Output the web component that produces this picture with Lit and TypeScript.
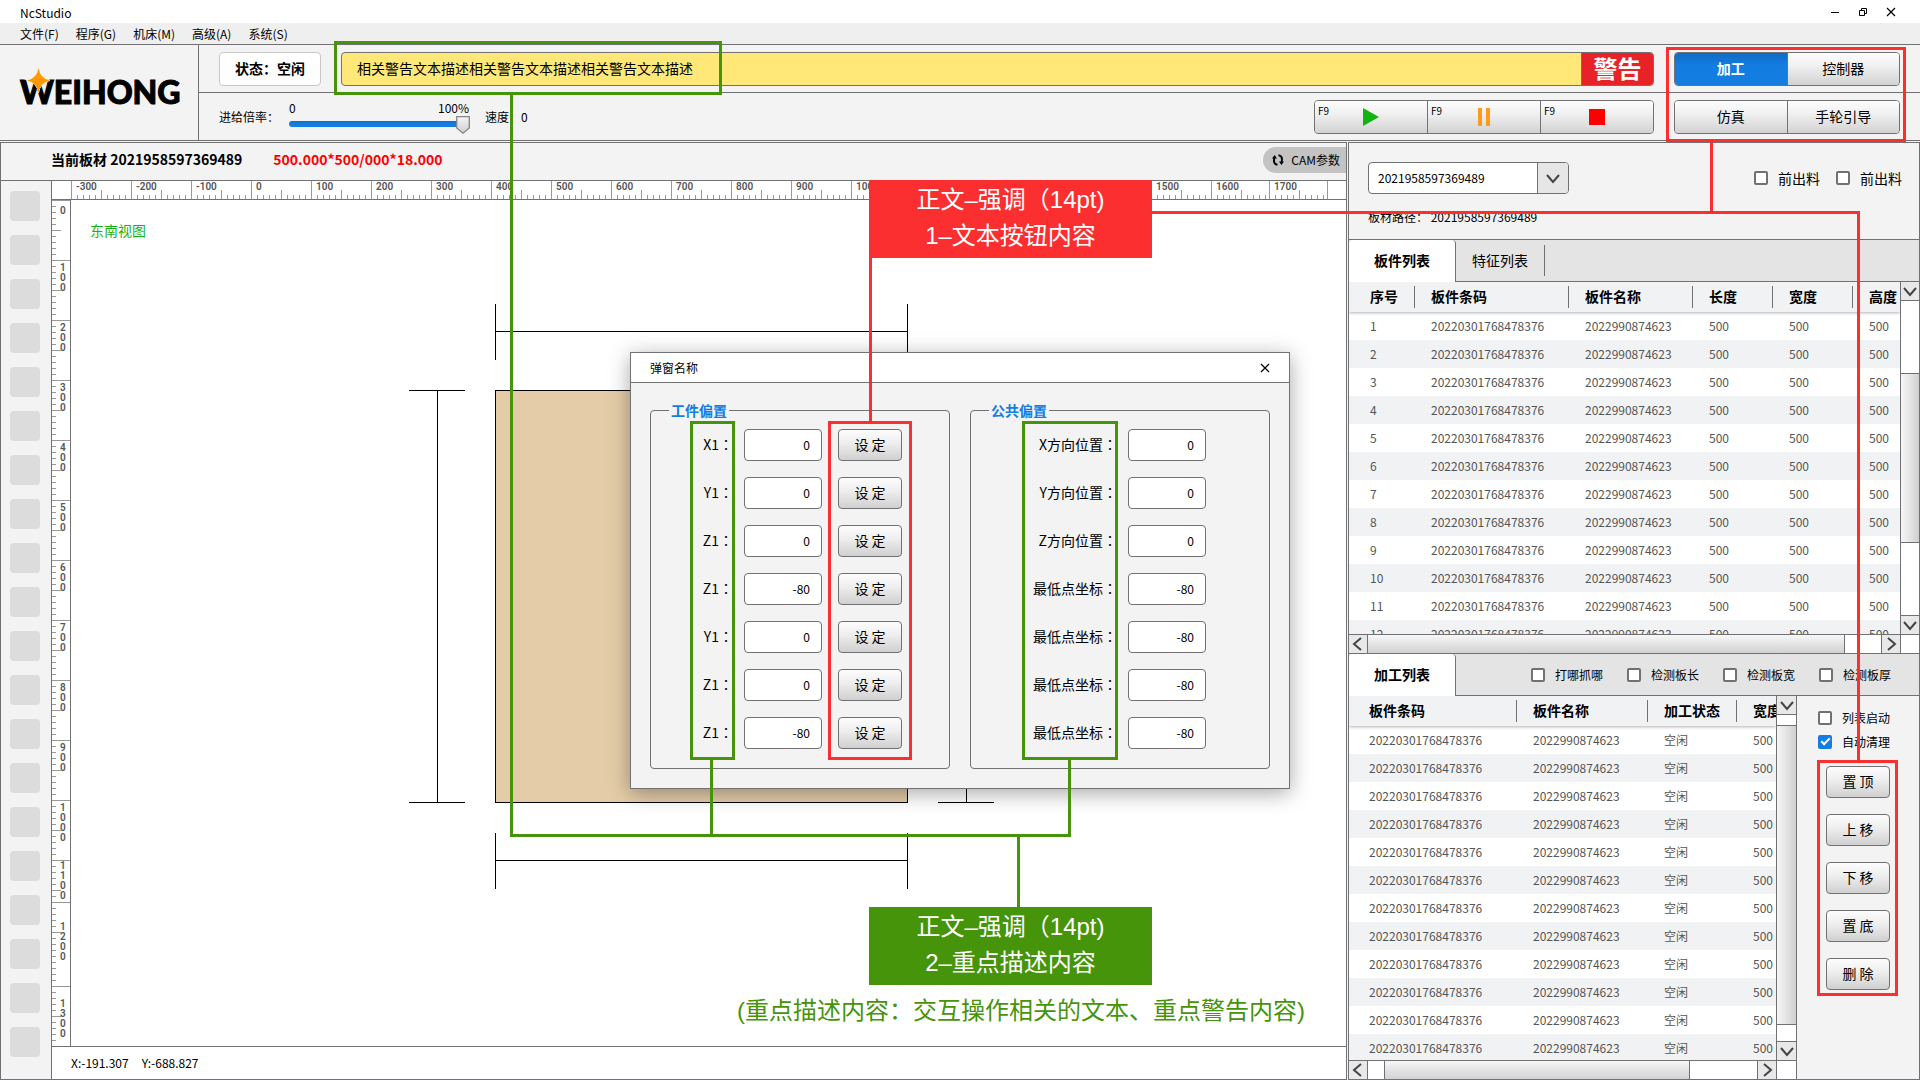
import { LitElement, html, svg, css } from "lit";
import { customElement } from "lit/decorators.js";

type Direction = "up" | "down" | "left" | "right";

const MENUS = ["文件(F)", "程序(G)", "机床(M)", "高级(A)", "系统(S)"];
const TOOLS = Array.from({ length: 20 }, (_, i) => i + 1);

const H_RULER = Array.from({ length: 21 }, (_, i) => (i - 3) * 100).map((label) => ({
  label,
  size: label < 1600 ? 60 : 58,
}));
const V_RULER = [
  ...Array.from({ length: 11 }, (_, i) => ({ label: i * 100, size: 60, pad: i === 0 ? 6 : 3 })),
  { label: 1100, size: 42, pad: 1 },
  { label: 1200, size: 84, pad: 20 },
  { label: 1300, size: 60, pad: 13 },
];

const PARTS = Array.from({ length: 12 }, (_, i) => [
  String(i + 1), "20220301768478376", "2022990874623", "500", "500", "500",
]);
const JOBS = Array.from({ length: 12 }, () => ["20220301768478376", "2022990874623", "空闲", "500"]);

const WORK_OFFSETS = [
  ["X1", "0"], ["Y1", "0"], ["Z1", "0"], ["Z1", "-80"], ["Y1", "0"], ["Z1", "0"], ["Z1", "-80"],
];
const PUBLIC_OFFSETS = [
  ["X方向位置", "0"], ["Y方向位置", "0"], ["Z方向位置", "0"],
  ["最低点坐标", "-80"], ["最低点坐标", "-80"], ["最低点坐标", "-80"], ["最低点坐标", "-80"],
];

const CHEVRONS: Record<Direction, string> = {
  up: "M2 10 L8 4 L14 10",
  down: "M2 5 L8 12 L14 5",
  left: "M11 2 L4 8 L11 14",
  right: "M5 2 L12 8 L5 14",
};

const chevron = (dir: Direction) => html`
  <svg class="chevron" viewBox="0 0 16 16" width="16" height="16" aria-hidden="true">
    <path d=${CHEVRONS[dir]} fill="none" stroke="#444" stroke-width="2"></path>
  </svg>`;

@customElement("app-root")
export class AppRoot extends LitElement {
  static styles = css`
    :host {
      display: block;
      --line: #717174;
      --panel: #f3f3f3;
      --blue: #147de2;
      --green: #46940a;
      --red: #fb2f30;
      font-family: "Noto Sans CJK SC", "Noto Sans", sans-serif;
      font-size: 12px;
      line-height: 16px;
      color: #000;
    }
    *, *::before, *::after { box-sizing: border-box; }
    button, input, select { font: inherit; color: inherit; margin: 0; }
    button { padding: 0; cursor: pointer; }
    svg { display: block; }

    .app {
      position: relative;
      display: flex;
      flex-direction: column;
      height: 100vh;
      min-height: 1080px;
      overflow: hidden;
      background: var(--panel);
    }

    .titlebar {
      display: flex;
      align-items: center;
      justify-content: space-between;
      height: 23px;
      padding: 2px 23px 0 20px;
      background: #fff;
    }
    .window-buttons { display: flex; gap: 16px; padding-bottom: 2px; }
    .icon-button { display: grid; place-items: center; width: 12px; height: 16px; border: 0; background: none; }
    .menubar {
      display: flex;
      align-items: center;
      gap: 17px;
      height: 22px;
      padding: 0 20px;
      background: #efefef;
      border-bottom: 1px solid var(--line);
    }
    .menubar button { border: 0; background: none; }

    .header {
      display: grid;
      grid-template-columns: 199px 1fr;
      height: 96px;
      border-bottom: 1px solid var(--line);
    }
    .brand { border-right: 1px solid var(--line); padding: 19px 0 0 16px; }
    .brand svg { overflow: visible; }
    .brand text { font-family: Lato, sans-serif; font-weight: 900; font-size: 32px; stroke: #000; stroke-width: 1px; }
    .bar { display: flex; align-items: flex-start; gap: 20px; padding: 7px 20px 0; }
    .bar-top { height: 48px; border-bottom: 1px solid var(--line); }
    .bar-bottom { height: 47px; }
    .state {
      display: grid;
      place-items: center;
      width: 102px;
      height: 34px;
      padding-bottom: 2px;
      font-size: 14px;
      font-weight: 700;
      background: #fff;
      border: 1px solid #c8c8c8;
      border-radius: 4px;
    }
    .alert {
      flex: 1;
      display: flex;
      height: 34px;
      font-size: 14px;
      line-height: 30px;
      background: #ffe778;
      border: 1px solid var(--line);
      border-radius: 4px;
      overflow: hidden;
    }
    .alert-text { flex: 1; padding-left: 15px; }
    .alert-tag {
      width: 72px;
      text-align: center;
      font-size: 24px;
      font-weight: 700;
      color: #fff;
      background: #e82327;
      border-left: 1px solid var(--line);
    }
    .group {
      display: flex;
      height: 34px;
      border: 1px solid var(--line);
      border-radius: 4px;
      overflow: hidden;
    }
    .group button {
      flex: 1 1 0;
      border: 0;
      font-size: 14px;
      background: linear-gradient(#fdfdfd, #f0f0f0 40%, #d2d2d2);
    }
    .group button + button { border-left: 1px solid var(--line); }
    .group .active {
      color: #fff;
      font-weight: 700;
      background: linear-gradient(#0f6bc6, var(--blue) 40%);
    }
    .modes { width: 226px; }
    .modes button { padding-bottom: 2px; }
    .transport { width: 340px; margin-left: auto; }
    .transport button { display: grid; grid-template-columns: 1fr auto 1fr; align-items: center; }
    .key { align-self: start; padding: 2px 0 0 3px; text-align: left; font-size: 10px; line-height: 16px; }
    .feed { display: flex; align-items: center; gap: 10px; height: 34px; }
    .scale { display: flex; flex-direction: column; width: 181px; }
    .scale-ends { display: flex; justify-content: space-between; padding-right: 1px; line-height: 15px; }
    .track { display: grid; align-items: center; height: 19px; }
    .track > * { grid-area: 1 / 1; }
    .track input {
      appearance: none;
      width: 100%;
      height: 6px;
      margin-bottom: 2px;
      border-radius: 3px;
      background: linear-gradient(#0e6fcb, var(--blue) 50%);
    }
    .track input::-webkit-slider-thumb { appearance: none; width: 14px; height: 18px; background: transparent; }
    .track svg { justify-self: end; pointer-events: none; }
    .speed { margin-left: -5px; line-height: 34px; }

    .main {
      flex: 1;
      min-height: 0;
      display: grid;
      grid-template-columns: 1fr 572px;
      gap: 1px;
      padding-top: 1px;
    }
    .left { display: flex; flex-direction: column; min-width: 0; min-height: 0; border: 1px solid var(--line); }
    .board {
      display: flex;
      align-items: center;
      height: 38px;
      padding: 0 0 4px 50px;
      font-size: 14px;
      font-weight: 700;
      border-bottom: 1px solid var(--line);
    }
    .board span { padding-bottom: 2px; }
    .board-size { margin-left: 31px; color: #f00; }
    .cam {
      display: flex;
      align-items: center;
      gap: 7px;
      height: 26px;
      margin-left: auto;
      padding: 0 6px 0 9px;
      border: 0;
      border-radius: 13px 0 0 13px;
      background: #c3c3c3;
      font-size: 12px;
      font-weight: 400;
    }
    .stage { flex: 1; min-height: 0; display: grid; grid-template-columns: 51px 1fr; }
    .tools {
      display: flex;
      flex-direction: column;
      gap: 14px;
      padding: 10px 0 0 9px;
      border-right: 1px solid var(--line);
      overflow: hidden;
    }
    .tools button { flex: none; width: 30px; height: 30px; border: 0; border-radius: 4px; background: #dcdcdc; }
    .view {
      display: grid;
      grid-template-columns: 19px 1fr;
      grid-template-rows: 19px 1fr 33px;
      min-width: 0;
      min-height: 0;
      background: #fff;
      font-size: 12px;
    }
    .corner { border-bottom: 1px solid var(--line); }
    .ruler-h, .ruler-v { display: flex; overflow: hidden; color: #555; font: 600 10px/12px Roboto, sans-serif; }
    .ruler-h { border-bottom: 1px solid var(--line); }
    .ruler-v { flex-direction: column; border-right: 1px solid var(--line); }
    .seg-h {
      flex: none;
      padding-left: 5px;
      background:
        linear-gradient(#999, #999) 0 0 / 1px 100% no-repeat,
        linear-gradient(#999, #999) 30px 100% / 1px 9px no-repeat,
        repeating-linear-gradient(to right, #999 0 1px, transparent 1px 6px) 0 100% / 100% 4px no-repeat;
    }
    .ruler-end { width: 1px; background: #999; }
    .seg-v {
      flex: none;
      padding-left: 8px;
      line-height: 10px;
      background:
        linear-gradient(#999, #999) 0 0 / 100% 1px no-repeat,
        linear-gradient(#999, #999) 0 30px / 9px 1px no-repeat,
        repeating-linear-gradient(to bottom, #999 0 1px, transparent 1px 6px) 0 0 / 4px 100% no-repeat;
    }
    .seg-v span { display: block; width: 6px; word-break: break-all; }
    .canvas { position: relative; min-width: 0; overflow: hidden; }
    .view-name { position: absolute; left: 19px; top: 20px; font-size: 14px; line-height: 20px; color: #12b412; }
    .coords {
      grid-column: 1 / -1;
      display: flex;
      align-items: center;
      gap: 13px;
      padding-left: 19px;
      border-top: 1px solid var(--line);
    }

    .right { display: flex; flex-direction: column; min-width: 0; min-height: 0; border: 1px solid var(--line); }
    .source { flex: none; height: 96px; padding: 19px 17px 0 19px; }
    .source-row { display: flex; align-items: center; justify-content: space-between; }
    .combo { display: grid; grid-template-columns: 1fr 32px; width: 201px; height: 32px; }
    .combo select {
      grid-area: 1 / 1 / 2 / 3;
      appearance: none;
      padding: 0 9px;
      background: #fff;
      border: 1px solid var(--line);
      border-radius: 4px;
    }
    .combo-arrow {
      grid-area: 1 / 2;
      display: grid;
      place-items: center;
      margin: 1px 1px 1px 0;
      border-left: 1px solid var(--line);
      border-radius: 0 3px 3px 0;
      background: #e6e6e6;
      pointer-events: none;
    }
    .path { margin: 15px 0 0; }
    .checks { display: flex; gap: 16px; }
    .checks.wide { gap: 24px; margin-left: 75px; align-items: center; }
    .check { display: flex; align-items: center; gap: 10px; }
    .check.large { font-size: 14px; }
    .check input {
      appearance: none;
      flex: none;
      display: grid;
      place-items: center;
      width: 14px;
      height: 14px;
      border: 2px solid var(--line);
      border-radius: 2px;
      background: #fff;
    }
    .check input:checked { background: var(--blue); border-color: var(--blue); }
    .check input:checked::after {
      content: "";
      width: 5px;
      height: 9px;
      margin-top: -3px;
      border: solid #fff;
      border-width: 0 2px 2px 0;
      transform: rotate(45deg);
    }
    .tabs {
      flex: none;
      display: flex;
      height: 43px;
      border-top: 1px solid var(--line);
      border-bottom: 1px solid var(--line);
      background: #e4e4e4;
    }
    .tab { padding-bottom: 2px; border: 0; background: none; font-size: 14px; }
    .tab.active {
      width: 107px;
      height: 42px;
      font-weight: 700;
      background: #fff;
      border-right: 1px solid var(--line);
      border-radius: 4px 4px 0 0;
    }
    .tab.next { width: 89px; margin: 5px 0; border-right: 1px solid var(--line); }

    .grid { display: grid; min-height: 0; background: #fff; }
    .parts { flex: 1 1 371px; grid-template: minmax(0, 1fr) 19px / minmax(0, 1fr) 19px; }
    .lower { flex: 1 1 383px; display: grid; min-height: 0; grid-template-columns: minmax(0, 1fr) 122px; }
    .jobs { grid-template: minmax(0, 1fr) 19px / minmax(0, 1fr) 20px; border-right: 1px solid var(--line); }
    .clip { overflow: hidden; }
    table { width: 100%; table-layout: fixed; border-spacing: 0; }
    thead { position: relative; box-shadow: 0 1px 3px rgba(0, 0, 0, 0.3); }
    th, td { padding: 0 0 0 17px; text-align: left; white-space: nowrap; overflow: hidden; }
    th:first-child, td:first-child { padding-left: 21px; }
    th {
      height: 30px;
      padding-bottom: 2px;
      font-size: 14px;
      background: linear-gradient(var(--line), var(--line)) 0 50% / 1px 22px no-repeat, #f1f2f4;
    }
    th:first-child { background: #f1f2f4; }
    td { height: 28px; color: #555; }
    tbody tr:nth-child(even) { background: #f1f2f4; }
    .jobs td:first-child, .jobs th:first-child { padding-left: 20px; }
    .c-no { width: 65px; }
    .c-code { width: 154px; }
    .c-name { width: 124px; }
    .c-num { width: 80px; }
    .c-jobcode { width: 167px; }
    .c-jobname { width: 131px; }
    .c-jobstate { width: 89px; }

    .scroll { display: flex; background: #fff; overflow: hidden; }
    .scroll button { flex: none; display: grid; place-items: center; border: 0; background: #e8e8e8; }
    .scroll.v { flex-direction: column; border-left: 1px solid var(--line); }
    .scroll.v button { height: 19px; border-bottom: 1px solid var(--line); }
    .scroll.v button:last-child { border-bottom: 0; border-top: 1px solid var(--line); }
    .scroll.h { border-top: 1px solid var(--line); }
    .scroll.h button { width: 19px; border-right: 1px solid var(--line); }
    .scroll.h button:last-child { border-right: 0; border-left: 1px solid var(--line); }
    .rest { flex-basis: 0; }
    .thumb { flex-basis: 0; }
    .v .thumb {
      border-top: 1px solid var(--line);
      border-bottom: 1px solid var(--line);
      background: linear-gradient(to right, #f6f6f6, #e0e0e0 60%, #cfcfcf);
    }
    .h .thumb { border-right: 1px solid var(--line); background: linear-gradient(#f8f8f8, #e0e0e0 60%, #d2d2d2); }
    .h .thumb.inset { border-left: 1px solid var(--line); }
    .scroll-end { border-top: 1px solid var(--line); border-left: 1px solid var(--line); background: #fff; }

    .side { display: flex; flex-direction: column; padding: 14px 0 0 21px; }
    .side .check + .check { margin-top: 8px; }
    .orders { display: flex; flex-direction: column; gap: 16px; padding: 16px 0 0 8px; }
    .push {
      width: 64px;
      height: 32px;
      padding-bottom: 2px;
      font-size: 14px;
      border: 1px solid var(--line);
      border-radius: 4px;
      background: linear-gradient(#fdfdfd, #ededed 45%, #d0d0d0);
    }

    .dialog {
      position: absolute;
      left: 630px;
      top: 352px;
      width: 660px;
      background: var(--panel);
      border: 1px solid var(--line);
      box-shadow: 0 4px 20px rgba(0, 0, 0, 0.35);
    }
    .dialog-title {
      display: flex;
      align-items: center;
      justify-content: space-between;
      height: 30px;
      padding: 0 18px 0 19px;
      background: #fff;
      border-bottom: 1px solid var(--line);
    }
    .dialog-title h2 { margin: 0; font-size: 12px; font-weight: 400; }
    .dialog-body { display: flex; gap: 20px; padding: 17px 19px 19px; }
    fieldset {
      flex: 1 1 0;
      min-width: 0;
      margin: 0;
      padding: 9px 0 19px;
      border: 1px solid var(--line);
      border-radius: 4px;
    }
    legend { margin-left: 18px; padding: 0 2px; font-size: 14px; line-height: 20px; font-weight: 700; color: var(--blue); }
    .fields { display: grid; gap: 16px; }
    .field { display: grid; grid-template-columns: 82px 78px 64px; column-gap: 11px; align-items: center; }
    .field .push { margin-left: 5px; }
    .public .field { grid-template-columns: 146px 78px; }
    .field label { padding-bottom: 2px; text-align: right; font-size: 14px; line-height: 20px; }
    .colon { font-family: "Noto Sans CJK TC", sans-serif; }
    .field input {
      width: 100%;
      height: 32px;
      padding: 0 11px 2px;
      text-align: right;
      background: #fff;
      border: 1px solid var(--line);
      border-radius: 4px;
    }

    .marks { position: absolute; left: 0; top: 0; pointer-events: none; }
    .note {
      position: absolute;
      left: 869px;
      width: 283px;
      height: 78px;
      padding: 2px 0;
      text-align: center;
      color: #fff;
      font: 24px/36px "Liberation Sans", "Noto Sans CJK SC", sans-serif;
    }
    .note p { margin: 0; }
    .note.red { top: 180px; background: var(--red); }
    .note.green { top: 907px; background: var(--green); }
    .caption {
      position: absolute;
      left: 737px;
      top: 993px;
      margin: 0;
      white-space: nowrap;
      color: var(--green);
      font: 24px/36px "Liberation Sans", "Noto Sans CJK SC", sans-serif;
    }
  `;

  private check(label: string, checked = false, large = false) {
    return html`<label class="check ${large ? "large" : ""}">
      <input type="checkbox" .checked=${checked} />${label}
    </label>`;
  }

  private scroll(axis: "v" | "h", before: number, size: number, after: number) {
    const [a, b]: Direction[] = axis === "v" ? ["down", "down"] : ["left", "right"];
    return html`<div class="scroll ${axis}">
      <button aria-label="向前滚动">${chevron(a)}</button>
      <div class="rest" style="flex-grow:${before}"></div>
      <div class="thumb ${before ? "inset" : ""}" style="flex-grow:${size}"></div>
      <div class="rest" style="flex-grow:${after}"></div>
      <button aria-label="向后滚动">${chevron(b)}</button>
    </div>`;
  }

  private table(columns: [string, string][], rows: string[][]) {
    return html`<div class="clip"><table>
      <colgroup>${columns.map(([, cls]) => html`<col class=${cls} />`)}</colgroup>
      <thead><tr>${columns.map(([name]) => html`<th scope="col">${name}</th>`)}</tr></thead>
      <tbody>${rows.map((row) => html`<tr>${row.map((cell) => html`<td>${cell}</td>`)}</tr>`)}</tbody>
    </table></div>`;
  }

  private closeIcon() {
    return html`<svg width="10" height="10" viewBox="0 0 10 10" aria-hidden="true">
      <path d="M1 1 L9 9 M9 1 L1 9" stroke="#000" stroke-width="1.2" fill="none"></path>
    </svg>`;
  }

  private renderHeader() {
    return html`
      <header class="titlebar">
        <span>NcStudio</span>
        <div class="window-buttons">
          <button class="icon-button" aria-label="最小化">
            <svg width="10" height="10" viewBox="0 0 10 10"><path d="M1 5.5 H9" stroke="#000"></path></svg>
          </button>
          <button class="icon-button" aria-label="还原">
            <svg width="10" height="10" viewBox="0 0 10 10" fill="none" stroke="#000">
              <path d="M1.5 3.5 H6.5 V8.5 H1.5 Z M3.5 3.5 V1.5 H8.5 V6.5 H6.5"></path>
            </svg>
          </button>
          <button class="icon-button" aria-label="关闭">${this.closeIcon()}</button>
        </div>
      </header>
      <nav class="menubar">${MENUS.map((m) => html`<button>${m}</button>`)}</nav>
      <section class="header">
        <div class="brand">
          <svg width="172" height="60" viewBox="0 0 172 60" role="img" aria-label="WEIHONG">
            <text x="4" y="40">WEIHONG</text>
            <path d="M22.500 4 Q24 14.500 34 16.500 Q24 18.500 22.500 29 Q21 18.500 11 16.500 Q21 14.500 22.500 4 Z"
              fill="#f90" stroke="#f3f3f3" stroke-width="1" paint-order="stroke"></path>
          </svg>
        </div>
        <div>
          <div class="bar bar-top">
            <div class="state">状态：空闲</div>
            <div class="alert" role="alert">
              <span class="alert-text">相关警告文本描述相关警告文本描述相关警告文本描述</span>
              <span class="alert-tag">警告</span>
            </div>
            <div class="group modes">
              <button class="active">加工</button><button>控制器</button>
            </div>
          </div>
          <div class="bar bar-bottom">
            <div class="feed">
              <label for="feed">进给倍率：</label>
              <div class="scale">
                <div class="scale-ends"><span>0</span><span>100%</span></div>
                <div class="track">
                  <input id="feed" type="range" min="0" max="100" value="100" />
                  <svg width="14" height="18" viewBox="0 0 14 18" aria-hidden="true">
                    <defs><linearGradient id="knob" x1="0" y1="0" x2="0" y2="1">
                      <stop offset="0" stop-color="#f4f4f4"></stop><stop offset="1" stop-color="#cfcfcf"></stop>
                    </linearGradient></defs>
                    <path d="M.7 .7 H13.300 V12 L7 17.200 L.7 12 Z" fill="url(#knob)" stroke="#85858a" stroke-width="1.300"></path>
                  </svg>
                </div>
              </div>
            </div>
            <div class="speed">速度：<span>0</span></div>
            <div class="group transport">
              <button aria-label="开始 F9"><span class="key">F9</span>
                <svg width="16" height="18" viewBox="0 0 16 18"><path d="M0 0 L16 9 L0 18 Z" fill="#12b412"></path></svg>
              </button>
              <button aria-label="暂停 F9"><span class="key">F9</span>
                <svg width="12" height="18" viewBox="0 0 12 18"><path d="M0 0 H4 V18 H0 Z M8 0 H12 V18 H8 Z" fill="#ff9a1e"></path></svg>
              </button>
              <button aria-label="停止 F9"><span class="key">F9</span>
                <svg width="16" height="16" viewBox="0 0 16 16"><path d="M0 0 H16 V16 H0 Z" fill="#f00"></path></svg>
              </button>
            </div>
            <div class="group modes"><button>仿真</button><button>手轮引导</button></div>
          </div>
        </div>
      </section>`;
  }

  private renderLeft() {
    return html`<section class="left">
      <div class="board">
        <span>当前板材 2021958597369489</span>
        <span class="board-size">500.000*500/000*18.000</span>
        <button class="cam">
          <svg width="12" height="12" viewBox="0 0 12 12" fill="none" stroke="#000" stroke-width="2" aria-hidden="true">
            <path d="M5.500 10.800 C2 10.400 1.600 7.500 2.300 4 M6.500 1.200 C10 1.600 10.400 4.500 9.700 8"></path>
            <path d="M0 4.600 L2.600 1 L5 4.600 Z M12 7.400 L9.400 11 L7 7.400 Z" fill="#000" stroke="none"></path>
          </svg>
          CAM参数
        </button>
      </div>
      <div class="stage">
        <div class="tools">${TOOLS.map((n) => html`<button aria-label="工具 ${n}"></button>`)}</div>
        <div class="view">
          <div class="corner"></div>
          <div class="ruler-h">
            ${H_RULER.map((s) => html`<div class="seg-h" style="width:${s.size}px">${s.label}</div>`)}
            <div class="ruler-end"></div>
          </div>
          <div class="ruler-v">
            ${V_RULER.map((s) => html`<div class="seg-v" style="height:${s.size}px;padding-top:${s.pad}px"><span>${s.label}</span></div>`)}
          </div>
          <div class="canvas">
            <svg width="1276" height="846" viewBox="71 200 1276 846" aria-hidden="true">
              <rect x="495.500" y="390.500" width="412" height="412" fill="#e4cca8" stroke="#000"></rect>
              <path fill="none" stroke="#000"
                d="M495.500 304 V360 M907.500 304 V360 M495.500 331.500 H907.500
                   M495.500 833 V889 M907.500 833 V889 M495.500 860.500 H907.500
                   M409 390.500 H465 M409 802.500 H465 M437.500 390.500 V802.500
                   M938 390.500 H994 M938 802.500 H994 M966.500 390.500 V802.500"></path>
            </svg>
            <span class="view-name">东南视图</span>
          </div>
          <div class="coords"><span>X:-191.307</span><span>Y:-688.827</span></div>
        </div>
      </div>
    </section>`;
  }

  private renderRight() {
    return html`<section class="right">
      <div class="source">
        <div class="source-row">
          <div class="combo">
            <select aria-label="板材编号"><option>2021958597369489</option></select>
            <span class="combo-arrow">${chevron("down")}</span>
          </div>
          <div class="checks">${this.check("前出料", false, true)}${this.check("前出料", false, true)}</div>
        </div>
        <p class="path">板材路径： 2021958597369489</p>
      </div>
      <div class="tabs">
        <button class="tab active">板件列表</button>
        <button class="tab next">特征列表</button>
      </div>
      <div class="grid parts">
        ${this.table([["序号", "c-no"], ["板件条码", "c-code"], ["板件名称", "c-name"], ["长度", "c-num"], ["宽度", "c-num"], ["高度", ""]], PARTS)}
        ${this.scroll("v", 72, 170, 72)}
        ${this.scroll("h", 0, 477, 36)}
        <div class="scroll-end"></div>
      </div>
      <div class="tabs">
        <button class="tab active">加工列表</button>
        <div class="checks wide">${["打哪抓哪", "检测板长", "检测板宽", "检测板厚"].map((t) => this.check(t))}</div>
      </div>
      <div class="lower">
        <div class="grid jobs">
          ${this.table([["板件条码", "c-jobcode"], ["板件名称", "c-jobname"], ["加工状态", "c-jobstate"], ["宽度", ""]], JOBS)}
          ${this.scroll("v", 10, 300, 16)}
          ${this.scroll("h", 16, 306, 68)}
          <div class="scroll-end"></div>
        </div>
        <div class="side">
          ${this.check("列表启动")}${this.check("自动清理", true)}
          <div class="orders">
            ${["置 顶", "上 移", "下 移", "置 底", "删 除"].map((t) => html`<button class="push">${t}</button>`)}
          </div>
        </div>
      </div>
    </section>`;
  }

  private field(prefix: string, [name, value]: string[], index: number, settable: boolean) {
    const id = `${prefix}-${index}`;
    return html`<div class="field">
      <label for=${id}>${name}<span class="colon" lang="zh-Hant">：</span></label>
      <input id=${id} type="text" .value=${value} />
      ${settable ? html`<button class="push">设 定</button>` : ""}
    </div>`;
  }

  private renderDialog() {
    return html`<section class="dialog" role="dialog" aria-label="弹窗名称">
      <div class="dialog-title">
        <h2>弹窗名称</h2>
        <button class="icon-button" aria-label="关闭">${this.closeIcon()}</button>
      </div>
      <div class="dialog-body">
        <fieldset>
          <legend>工件偏置</legend>
          <div class="fields">${WORK_OFFSETS.map((f, i) => this.field("work", f, i, true))}</div>
        </fieldset>
        <fieldset class="public">
          <legend>公共偏置</legend>
          <div class="fields">${PUBLIC_OFFSETS.map((f, i) => this.field("public", f, i, false))}</div>
        </fieldset>
      </div>
    </section>`;
  }

  private renderMarks() {
    const box = (x: number, y: number, right: number, bottom: number) => svg`
      <rect x=${x + 1.5} y=${y + 1.5} width=${right - x - 3} height=${bottom - y - 3}></rect>`;
    return html`
      <svg class="marks" width="1920" height="1080" viewBox="0 0 1920 1080" fill="none" stroke-width="3" aria-hidden="true">
        <g stroke="#46940a">
          ${box(334, 41, 722, 95)}${box(690, 421, 735, 760)}${box(1022, 421, 1118, 760)}
          <path d="M511.500 95 V835.500 H1069.500 V760 M711.500 760 V835.500 M1018.500 835.500 V907"></path>
        </g>
        <g stroke="#fb2f30">
          ${box(1666, 47, 1906, 142)}${box(828, 421, 912, 760)}${box(1817, 760, 1898, 996)}
          <path d="M870.500 258 V421 M1711.500 142 V212.500 M1152 212.500 H1858.500 V760"></path>
        </g>
      </svg>
      <div class="note red"><p>正文–强调（14pt)</p><p>1–文本按钮内容</p></div>
      <div class="note green"><p>正文–强调（14pt)</p><p>2–重点描述内容</p></div>
      <p class="caption">(重点描述内容：交互操作相关的文本、重点警告内容)</p>`;
  }

  render() {
    return html`<div class="app">
      ${this.renderHeader()}
      <main class="main">${this.renderLeft()}${this.renderRight()}</main>
      ${this.renderDialog()}
      ${this.renderMarks()}
    </div>`;
  }
}
